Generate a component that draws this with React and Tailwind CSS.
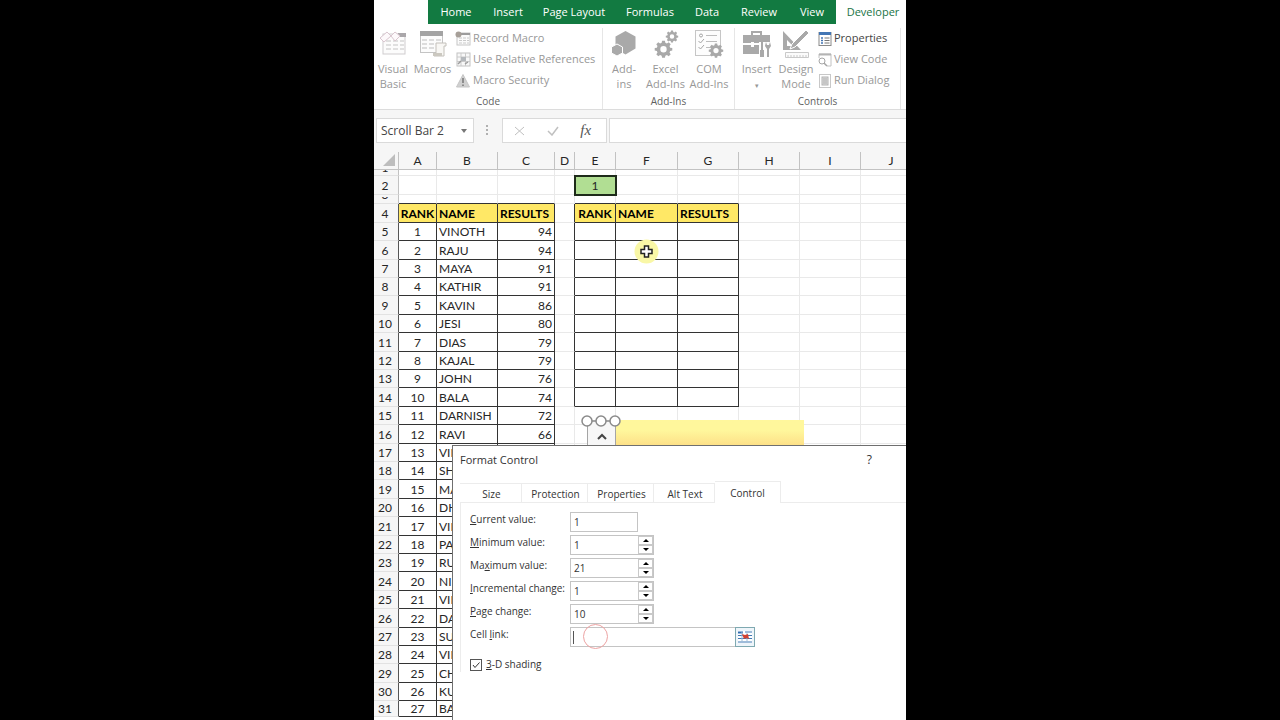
import React, { useState } from 'react';
import clsx from 'clsx';

const TABS = [
  { label: 'Home', width: 'w-[56px]' },
  { label: 'Insert', width: 'w-[48px]' },
  { label: 'Page Layout', width: 'w-[84px]' },
  { label: 'Formulas', width: 'w-[68px]' },
  { label: 'Data', width: 'w-[46px]' },
  { label: 'Review', width: 'w-[58px]' },
  { label: 'View', width: 'w-[48px]' },
];

const COLUMNS = [
  { id: 'A', width: 'w-[38px]' },
  { id: 'B', width: 'w-[61px]' },
  { id: 'C', width: 'w-[57px]' },
  { id: 'D', width: 'w-[20px]' },
  { id: 'E', width: 'w-[41px]' },
  { id: 'F', width: 'w-[62px]' },
  { id: 'G', width: 'w-[61px]' },
  { id: 'H', width: 'w-[61px]' },
  { id: 'I', width: 'w-[61px]' },
  { id: 'J', width: 'w-[61px]' },
];

const RESULTS = [
  ['VINOTH', 94],
  ['RAJU', 94],
  ['MAYA', 91],
  ['KATHIR', 91],
  ['KAVIN', 86],
  ['JESI', 80],
  ['DIAS', 79],
  ['KAJAL', 79],
  ['JOHN', 76],
  ['BALA', 74],
  ['DARNISH', 72],
  ['RAVI', 66],
  ['VIN'],
  ['SH'],
  ['MA'],
  ['DH'],
  ['VIN'],
  ['PA'],
  ['RU'],
  ['NI'],
  ['VIN'],
  ['DA'],
  ['SU'],
  ['VIN'],
  ['CH'],
  ['KU'],
  ['BA'],
];

const HEADINGS = { A: 'RANK', B: 'NAME', C: 'RESULTS', E: 'RANK', F: 'NAME', G: 'RESULTS' };
const ROW_HEIGHTS = ['h-[19px]', 'h-[18px]', 'h-[19px]', 'h-[18px]', 'h-[18px]'];

/* ---------- icons ---------- */

const GEAR =
  'M10 1h4l.6 3 2.2.9 2.6-1.7 2.8 2.8-1.7 2.6.9 2.2 3 .6v3.4l-3 .6-.9 2.2 1.7 2.6-2.8 2.8-2.6-1.7-2.2.9-.6 3h-4l-.6-3-2.2-.9-2.6 1.7L1.800 20.200l1.700-2.600-.9-2.200-3-.6v-3.400l3-.6.9-2.200L1.800 6l2.800-2.800 2.600 1.700 2.200-.9zM12 8.500a4.500 4.500 0 1 0 0 9 4.500 4.500 0 0 0 0-9z';

const Gear = ({ x, y, size }) => (
  <g transform={`translate(${x} ${y}) scale(${size / 24})`}>
    <path d={GEAR} fill="#a9a9a9" fillRule="evenodd" />
  </g>
);

const VisualBasicIcon = () => (
  <svg className="shrink-0" width="28" height="28" viewBox="0 0 28 28" fill="none">
    <rect x="4" y="4" width="22" height="20" fill="#fcfcfc" stroke="#d0cdcf" />
    <path d="M19 3h8v4h-8z" fill="#aaa7aa" />
    <path d="M7 11h18M7 15h18M7 19h18" stroke="#c4c4c4" strokeDasharray="5 2" />
    <path d="M1 8l7-6 4 4-7 6zM12 6l4-4 5 4-5 5z" fill="#fdf9fb" stroke="#d9c6cf" />
  </svg>
);

const MacrosIcon = () => (
  <svg className="shrink-0" width="28" height="28" viewBox="0 0 28 28" fill="none">
    <rect x="1.500" y="1.500" width="22" height="21" fill="#fcfcfc" stroke="#c4c4c4" />
    <path d="M1 1h23v5H1z" fill="#a3a3a3" />
    <path d="M3 10h20M3 14h13M3 18h12" stroke="#bdbdbd" strokeDasharray="5 2" />
    <path d="M17 13h10v3h-2v10H15v-3h2z" fill="#f8f7f4" stroke="#c3c0ba" />
    <path d="M14 23h9v3h-9z" fill="#cbc8c0" />
  </svg>
);

const RecordIcon = () => (
  <svg className="shrink-0" width="16" height="16" viewBox="0 0 16 16" fill="none">
    <rect x="2" y="2" width="13" height="12" fill="#fbfbfb" stroke="#c6c6c6" />
    <path d="M6 2h9v2H6z" fill="#9c9c9c" />
    <path d="M4 7h10M4 9.500h10M4 12h10" stroke="#cacaca" strokeDasharray="3 1" />
    <circle cx="3.500" cy="3.500" r="3" fill="#a69f98" />
  </svg>
);

const RelativeIcon = () => (
  <svg className="shrink-0" width="16" height="16" viewBox="0 0 16 16" fill="none">
    <rect x="2" y="1" width="13" height="13" fill="#f8f8f8" stroke="#c2c2c2" />
    <path d="M2 5h13M2 9.500h13M6 1v13M10.500 1v13" stroke="#cacaca" />
    <path d="M6 5h5v4H6z" fill="#b4b8bc" />
    <path d="M3 12l3-3M10 12l3-2" stroke="#9c9c9c" strokeWidth="1.500" />
  </svg>
);

const SecurityIcon = () => (
  <svg className="shrink-0" width="16" height="16" viewBox="0 0 16 16">
    <path d="M8 1.500L14.500 14h-13z" fill="#d0d0d0" stroke="#c6c6c6" strokeLinejoin="round" />
    <path d="M8 5v5M8 11.500v1.500" stroke="#7d7d7d" strokeWidth="1.600" />
  </svg>
);

const HexagonsIcon = () => (
  <svg className="shrink-0" width="28" height="28" viewBox="0 0 28 28" fill="#a9a9a9">
    <path d="M15.500 1l10 5.500v12l-10 6-10-6v-12z" />
    <path d="M7 14l5.500 3v6L7 26l-5.500-3v-6z" stroke="#fff" strokeWidth="1" />
  </svg>
);

const GearsIcon = () => (
  <svg className="shrink-0" width="28" height="28" viewBox="0 0 28 28">
    <Gear x={3} y={10} size={17} />
    <Gear x={14} y={0} size={12} />
  </svg>
);

const ComIcon = () => (
  <svg className="shrink-0" width="30" height="28" viewBox="0 0 30 28" fill="none">
    <rect x="1.500" y="0.500" width="25" height="25" fill="#fdfdfd" stroke="#c6c6c6" />
    <path d="M12 5.500h11M12 11.500h11M12 17.500h5" stroke="#bdbdbd" />
    <circle cx="7" cy="5.500" r="1.500" stroke="#a5a5a5" />
    <path d="M4.500 11l2 2 3.500-4M4.500 17l2 2 3.500-4" stroke="#a5a5a5" />
    <Gear x={15} y={13} size={14} />
  </svg>
);

const ToolboxIcon = () => (
  <svg className="shrink-0" width="30" height="30" viewBox="0 0 30 30" fill="#a9a9a9">
    <path d="M9 5V1h11v4h-2V3h-7v2z" />
    <path d="M1 5h27v8H1zM1 15h17v9H1z" />
    <path d="M9 12h3v5H9z" fill="#fff" />
    <path d="M17 12h12v16H17z" fill="#fff" />
    <path d="M20 12h1v8h1v7h-4v-7h1v-8zM24 12l1 3h2l1-3 1 4-2 3v8h-2v-8l-2-3z" />
  </svg>
);

const DesignIcon = () => (
  <svg className="shrink-0" width="28" height="30" viewBox="0 0 28 30" fill="#a9a9a9">
    <path d="M1 1l18 19H1zM5 10v6h6z" fillRule="evenodd" />
    <path d="M24 0l3 3-14 14-5 2 2-5z" stroke="#fff" />
    <path d="M3.500 22.500h23v5h-23z" fill="#fbfbfb" stroke="#c9c9c9" />
    <path d="M6 25v2M9 25v2M12 25v2M15 25v2M18 25v2M21 25v2M24 25v2" stroke="#c9c9c9" />
  </svg>
);

const PropertiesIcon = () => (
  <svg className="shrink-0" width="14" height="16" viewBox="0 0 14 16" fill="none">
    <rect x="1" y="1.500" width="12" height="13" fill="#fff" stroke="#8a8a8a" />
    <path d="M1 1h12v3H1z" fill="#4376b5" />
    <path d="M3 7h2M3 9.500h2M3 12h2" stroke="#4376b5" strokeWidth="1.300" />
    <path d="M6.500 7h5M6.500 9.500h5M6.500 12h5" stroke="#777" />
  </svg>
);

const ViewCodeIcon = () => (
  <svg className="shrink-0" width="14" height="16" viewBox="0 0 14 16" fill="none">
    <path d="M1 6V2h12v12H9" stroke="#c2c2c2" />
    <path d="M1 1.500h12v2H1z" fill="#b4b4b4" />
    <circle cx="4" cy="9" r="3" fill="#fff" stroke="#a5a5a5" />
    <path d="M6 11l3 3" stroke="#a5a5a5" strokeWidth="1.500" />
  </svg>
);

const RunDialogIcon = () => (
  <svg className="shrink-0" width="14" height="16" viewBox="0 0 14 16" fill="none">
    <rect x="1.500" y="1.500" width="11" height="13" stroke="#c8c8c8" />
    <rect x="4" y="4" width="6" height="8" fill="#dedede" stroke="#b2b2b2" />
    <path d="M5 6h4M5 8h4M5 10h4" stroke="#adadad" />
  </svg>
);

const RangePickerIcon = () => (
  <svg width="16" height="14" viewBox="0 0 16 14" fill="none">
    <rect x="1" y="1" width="14" height="12" fill="#fff" />
    <path d="M1 1.500h5v2H1z" fill="#2f6db0" />
    <path d="M8 2h7M1 5.500h14M1 8.500h14M1 12h14" stroke="#3f79b4" />
    <path d="M5 2v10M10 2v10" stroke="#9dbbd8" />
    <path d="M5 4l3 1 3-1 1 5-3-1-2 1z" fill="#d2402f" />
  </svg>
);

/* ---------- ribbon ---------- */

const BigButton = ({ icon, lines, className }) => (
  <button className={clsx('flex shrink-0 flex-col items-center text-[11px] leading-[15px] text-[#989898]', className)}>
    <span className="flex h-[33px] items-start justify-center pt-[2px]">{icon}</span>
    {lines.map((line) => (
      <span key={line} className="whitespace-nowrap">{line}</span>
    ))}
  </button>
);

const SmallButton = ({ icon, label, active }) => (
  <button
    className={clsx(
      'flex h-[21px] items-center gap-[2px] text-[11px] whitespace-nowrap',
      active ? 'text-[#444]' : 'text-[#989898]'
    )}
  >
    {icon}
    {label}
  </button>
);

const Group = ({ name, className, children }) => (
  <section className={clsx('flex shrink-0 flex-col border-r border-[#e6e6e6]', className)}>
    <div className="flex h-[66px]">{children}</div>
    <h2 className="text-center text-[10px] leading-[14px] text-[#5f5f5f]">{name}</h2>
  </section>
);

const Ribbon = () => (
  <header>
    <nav className="flex h-6 overflow-hidden bg-[#127a41] text-[11px] text-white">
      <div className="w-[54px] shrink-0 bg-white"></div>
      {TABS.map((tab) => (
        <button key={tab.label} className={clsx('shrink-0 whitespace-nowrap', tab.width)}>
          {tab.label}
        </button>
      ))}
      <button className="flex-1 bg-white pl-1 text-[#217346]">Developer</button>
    </nav>
    <div className="flex h-[86px] overflow-hidden border-b border-[#dcdcdc] bg-white pt-1">
      <Group name="Code" className="w-[229px]">
        <BigButton icon={<VisualBasicIcon />} lines={['Visual', 'Basic']} className="w-[38px]" />
        <BigButton icon={<MacrosIcon />} lines={['Macros']} className="w-[41px]" />
        <div className="flex flex-col pl-[2px]">
          <SmallButton icon={<RecordIcon />} label="Record Macro" />
          <SmallButton icon={<RelativeIcon />} label="Use Relative References" />
          <SmallButton icon={<SecurityIcon />} label="Macro Security" />
        </div>
      </Group>
      <Group name="Add-Ins" className="w-[132px]">
        <BigButton icon={<HexagonsIcon />} lines={['Add-', 'ins']} className="w-[42px]" />
        <BigButton icon={<GearsIcon />} lines={['Excel', 'Add-Ins']} className="w-[41px]" />
        <BigButton icon={<ComIcon />} lines={['COM', 'Add-Ins']} className="w-[46px]" />
      </Group>
      <Group name="Controls" className="w-[166px]">
        <BigButton
          icon={<ToolboxIcon />}
          lines={['Insert', <span key="arrow" className="text-[7px]">▾</span>]}
          className="w-[43px]"
        />
        <BigButton icon={<DesignIcon />} lines={['Design', 'Mode']} className="w-[36px]" />
        <div className="flex flex-col pl-1">
          <SmallButton icon={<PropertiesIcon />} label="Properties" active />
          <SmallButton icon={<ViewCodeIcon />} label="View Code" />
          <SmallButton icon={<RunDialogIcon />} label="Run Dialog" />
        </div>
      </Group>
    </div>
  </header>
);

const FormulaBar = () => (
  <div className="flex h-[42px] items-start bg-[#f6f6f6] pt-[8px] pl-[2px]">
    <button className="flex h-[25px] w-[98px] items-center justify-between border border-[#dadada] bg-white pr-[6px] pl-1 text-[12px] text-[#444]">
      Scroll Bar 2
      <svg width="6" height="4" viewBox="0 0 6 4" fill="#777"><path d="M0 0h6L3 4z" /></svg>
    </button>
    <svg width="28" height="25" viewBox="0 0 28 25" fill="#b0b0b0">
      <path d="M12 7h2v2h-2zM12 11h2v2h-2zM12 15h2v2h-2z" />
    </svg>
    <div className="flex h-[25px] w-[105px] items-center justify-around border border-[#dadada] bg-white pr-1">
      <button aria-label="Cancel">
        <svg width="11" height="10" viewBox="0 0 11 10" stroke="#c0c0c0"><path d="M1 1l9 8M10 1L1 9" /></svg>
      </button>
      <button aria-label="Enter">
        <svg width="12" height="10" viewBox="0 0 12 10" stroke="#c0c0c0" strokeWidth="1.500" fill="none">
          <path d="M1 5l4 4 6-8" />
        </svg>
      </button>
      <button className="font-['Liberation_Serif',serif] text-[15px] text-[#555] italic">fx</button>
    </div>
    <input
      aria-label="Formula"
      className="ml-[2px] h-[25px] min-w-0 flex-1 border border-r-0 border-[#dadada] bg-white px-1 text-[12px] outline-none"
    />
  </div>
);

/* ---------- worksheet ---------- */

const GRID = 'border-[#e9e9e9]';
const INK = 'border-[#333]';

const cellText = (col, row) => {
  if (row === 2 && col === 'E') return '1';
  if (row === 4) return HEADINGS[col];
  if (row < 5) return null;
  const entry = RESULTS[row - 5];
  if (col === 'A') return row - 4;
  if (col === 'B') return entry[0];
  if (col === 'C') return entry[1];
  return null;
};

const Cell = ({ col, row }) => {
  const inList = 'ABC'.includes(col) && row >= 4;
  const inView = 'EFG'.includes(col) && row >= 4 && row <= 14;
  const boxed = inList || inView;
  const aboveBox = row === 3 && 'ABCEFG'.includes(col);
  const beforeBox = col === 'D' && row >= 4 && row <= 14;
  const linked = row === 2 && col === 'E';

  return (
    <td
      className={clsx(
        'overflow-hidden border-r border-b p-0 whitespace-nowrap',
        boxed ? INK : aboveBox ? 'border-r-[#e9e9e9] border-b-[#333]' : beforeBox ? 'border-r-[#333] border-b-[#e9e9e9]' : GRID,
        row === 4 && boxed && 'bg-[#ffe866] font-bold text-black',
        linked && 'bg-[#b1de93] outline-2 -outline-offset-1 outline-[#1e2b1a]',
        (col === 'A' || col === 'E') && 'text-center',
        'BFG'.includes(col) && 'pl-[2px]',
        col === 'C' && (row === 4 ? 'pl-[2px]' : 'pr-[2px] text-right')
      )}
    >
      {cellText(col, row)}
    </td>
  );
};

const rowHeight = (row) => {
  if (row === 1) return 'h-[6px]';
  if (row === 2) return 'h-[19px]';
  if (row === 3) return 'h-[9px]';
  if (row === 31) return 'h-[16px]';
  return ROW_HEIGHTS[(row - 4) % 5];
};

const Worksheet = () => (
  <table className="w-[548px] table-fixed border-separate border-spacing-0 bg-white font-[Lato,sans-serif] text-[12px] leading-[15px] text-[#262626]">
    <colgroup>
      <col className="w-[25px]" />
      {COLUMNS.map((col) => (
        <col key={col.id} className={col.width} />
      ))}
    </colgroup>
    <thead>
      <tr className="h-[18px] bg-[#f6f6f6]">
        <th className="border-r border-b border-[#c2c2c2] p-0" aria-label="Select all">
          <svg className="mr-[2px] ml-auto" width="13" height="13" viewBox="0 0 13 13" fill="#bdbdbd">
            <path d="M12 0v12H0z" />
          </svg>
        </th>
        {COLUMNS.map((col) => (
          <th key={col.id} className="border-r border-b border-[#c2c2c2] p-0 font-normal">
            {col.id}
          </th>
        ))}
      </tr>
    </thead>
    <tbody>
      {Array.from({ length: 31 }, (_, i) => i + 1).map((row) => (
        <tr key={row} className={rowHeight(row)}>
          <th
            className={clsx(
              'border-r border-b border-b-[#e2e2e2] bg-[#f6f6f6] p-0 pr-[2px] font-normal',
              row >= 4 ? 'border-r-[#555]' : 'border-r-[#c2c2c2]'
            )}
          >
            {row === 1 || row === 3 ? (
              <span className="flex h-[5px] items-end justify-center overflow-hidden">{row}</span>
            ) : (
              row
            )}
          </th>
          {COLUMNS.map((col) => (
            <Cell key={col.id} col={col.id} row={row} />
          ))}
        </tr>
      ))}
    </tbody>
  </table>
);

// Selected scroll bar object with its drag handles
const ScrollBarShape = () => (
  <div className="absolute top-[420px] left-[213px] flex h-[26px] w-[217px]">
    <button className="flex w-[29px] items-center justify-center border-x border-[#a5a5a5] bg-[#f7f7f7] pt-[6px]" aria-label="Scroll up">
      <svg width="10" height="7" viewBox="0 0 10 7" fill="none" stroke="#444" strokeWidth="2">
        <path d="M1 6l4-4 4 4" />
      </svg>
    </button>
    <div className="flex-1 bg-linear-to-b from-[#fff79c] from-40% to-[#fddf87]"></div>
    <svg className="absolute -top-[5px] -left-[6px]" width="42" height="12" viewBox="0 0 42 12" fill="#fff" stroke="#8a8a8a" strokeWidth="1.500">
      <path d="M6 6h28" />
      <circle cx="6" cy="6" r="5" />
      <circle cx="20" cy="6" r="5" />
      <circle cx="34" cy="6" r="5" />
    </svg>
  </div>
);

const CellCursor = () => (
  <svg className="absolute top-[239px] left-[260px]" width="25" height="25" viewBox="0 0 25 25">
    <circle cx="12.500" cy="12.500" r="12" fill="#f9f7a6" />
    <path d="M10.500 7h4v3.500H18v4h-3.500V18h-4v-3.500H7v-4h3.500z" fill="#fff" stroke="#222" strokeWidth="1.500" />
  </svg>
);

/* ---------- format control dialog ---------- */

const DIALOG_TABS = [
  { label: 'Size', width: 'w-[62px]' },
  { label: 'Protection', width: 'w-[66px]' },
  { label: 'Properties', width: 'w-[66px]' },
  { label: 'Alt Text', width: 'w-[61px]' },
];

const FIELDS = [
  { id: 'current', label: ['', 'C', 'urrent value:'], spin: false },
  { id: 'minimum', label: ['', 'M', 'inimum value:'], spin: true },
  { id: 'maximum', label: ['Ma', 'x', 'imum value:'], spin: true },
  { id: 'incremental', label: ['', 'I', 'ncremental change:'], spin: true },
  { id: 'page', label: ['', 'P', 'age change:'], spin: true },
];

const Label = ({ htmlFor, parts }) => (
  <label htmlFor={htmlFor} className="w-[100px] shrink-0 leading-[15px] whitespace-nowrap">
    {parts[0]}
    <span className="underline">{parts[1]}</span>
    {parts[2]}
  </label>
);

const Spinner = ({ onStep }) => (
  <span className="flex w-[15px] flex-col">
    <button type="button" aria-label="Increase" onClick={() => onStep(1)} className="flex flex-1 items-center justify-center border border-[#c9c9c9]">
      <svg width="6" height="3" viewBox="0 0 6 3"><path d="M0 3h6L3 0z" /></svg>
    </button>
    <button type="button" aria-label="Decrease" onClick={() => onStep(-1)} className="flex flex-1 items-center justify-center border border-[#c9c9c9]">
      <svg width="6" height="3" viewBox="0 0 6 3"><path d="M0 0h6L3 3z" /></svg>
    </button>
  </span>
);

const FormatControlDialog = () => {
  const [values, setValues] = useState({ current: 1, minimum: 1, maximum: 21, incremental: 1, page: 10 });
  const [cellLink, setCellLink] = useState('');
  const [shading, setShading] = useState(true);

  const setField = (id, value) => setValues((prev) => ({ ...prev, [id]: value }));

  return (
    <div
      role="dialog"
      aria-label="Format Control"
      className="absolute top-[445px] right-0 bottom-0 left-[78px] overflow-hidden border-t border-l border-[#6f6f6f] bg-white pl-[7px] text-[10px] text-[#333]"
    >
      <div className="flex h-[35px] items-start justify-between pt-[5px] pr-[34px] leading-[18px]">
        <h1 className="text-[11px]">Format Control</h1>
        <button className="text-[12px]">?</button>
      </div>
      <div className="flex h-[22px] items-end border-b border-[#ececec]">
        {DIALOG_TABS.map((tab) => (
          <button key={tab.label} className={clsx('h-[19px] border-t border-r border-[#ececec] pt-[2px] pl-[2px]', tab.width)}>
            {tab.label}
          </button>
        ))}
        <button className="-mb-px h-[22px] w-[66px] border-t border-r border-[#ececec] bg-white pt-[2px]">Control</button>
      </div>
      <form className="flex flex-col gap-[3px] border-l border-[#ececec] pt-[9px] pl-[9px]">
        {FIELDS.map((field) => (
          <div key={field.id} className="flex h-5">
            <Label htmlFor={field.id} parts={field.label} />
            <div className={clsx('flex border border-[#c4c4c4]', field.spin ? 'w-[84px]' : 'w-[68px]')}>
              <input
                id={field.id}
                value={values[field.id]}
                onChange={(e) => setField(field.id, e.target.value)}
                className="min-w-0 flex-1 pl-[3px] outline-none"
              />
              {field.spin && <Spinner onStep={(step) => setField(field.id, Number(values[field.id]) + step)} />}
            </div>
          </div>
        ))}
        <div className="relative flex h-5">
          <Label htmlFor="link" parts={['Cell ', 'l', 'ink:']} />
          <input
            id="link"
            value={cellLink}
            onChange={(e) => setCellLink(e.target.value)}
            className="w-[165px] border border-r-0 border-[#c4c4c4] pl-[3px] outline-none"
          />
          <button type="button" aria-label="Select range" className="flex w-5 items-center justify-center border border-[#7fa9b1] bg-[#eef5fa]">
            <RangePickerIcon />
          </button>
          <span className="absolute top-1 left-[103px] h-[13px] w-px bg-[#555]"></span>
          <span className="absolute -top-[3px] left-[113px] size-[25px] rounded-full border border-[#eda3a3]"></span>
        </div>
        <label className="flex items-center gap-1 pt-[7px] leading-[15px]">
          <span className="relative flex size-[12px]">
            <input
              type="checkbox"
              checked={shading}
              onChange={(e) => setShading(e.target.checked)}
              className="size-[12px] appearance-none border border-[#555] bg-white"
            />
            {shading && (
              <svg className="pointer-events-none absolute inset-0" width="12" height="12" viewBox="0 0 12 12" fill="none" stroke="#333">
                <path d="M3 6l2 2.500L9.500 3.500" />
              </svg>
            )}
          </span>
          <span><span className="underline">3</span>-D shading</span>
        </label>
      </form>
    </div>
  );
};

const App = () => (
  <div className="h-screen overflow-hidden bg-black font-['Open_Sans','Noto_Sans',sans-serif]">
    <main className="relative mx-auto h-full w-full max-w-[532px] overflow-hidden bg-white">
      <Ribbon />
      <FormulaBar />
      <Worksheet />
      <ScrollBarShape />
      <CellCursor />
      <FormatControlDialog />
    </main>
  </div>
);

export default App;
